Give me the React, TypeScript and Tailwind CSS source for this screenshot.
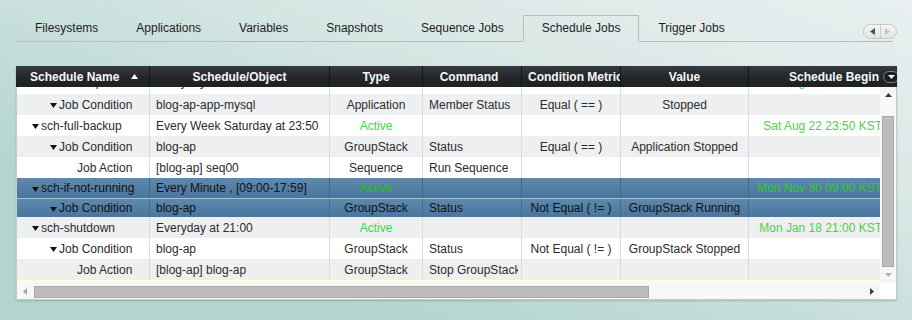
import React from "react";

type Bg = "white" | "grey" | "sel";
type Row = {
  level: 0 | 1 | 2;
  exp: boolean;
  name: string;
  obj: string;
  type: string;
  active?: boolean;
  cmd: string;
  metric: string;
  value: string;
  begin: string;
  bg: Bg;
  h: "h21" | "h18" | "h24";
};

const rows: Row[] = [
  { level: 1, exp: true, name: "Job Condition", obj: "blog-ap-app-mysql", type: "Application", cmd: "Member Status", metric: "Equal ( == )", value: "Stopped", begin: "", bg: "grey", h: "h21" },
  { level: 0, exp: true, name: "sch-full-backup", obj: "Every Week Saturday at 23:50", type: "Active", active: true, cmd: "", metric: "", value: "", begin: "Sat Aug 22 23:50 KST", bg: "white", h: "h21" },
  { level: 1, exp: true, name: "Job Condition", obj: "blog-ap", type: "GroupStack", cmd: "Status", metric: "Equal ( == )", value: "Application Stopped", begin: "", bg: "grey", h: "h21" },
  { level: 2, exp: false, name: "Job Action", obj: "[blog-ap] seq00", type: "Sequence", cmd: "Run Sequence", metric: "", value: "", begin: "", bg: "white", h: "h21" },
  { level: 0, exp: true, name: "sch-if-not-running", obj: "Every Minute , [09:00-17:59]", type: "Active", active: true, cmd: "", metric: "", value: "", begin: "Mon Nov 30 09:00 KST", bg: "sel", h: "h21" },
  { level: 1, exp: true, name: "Job Condition", obj: "blog-ap", type: "GroupStack", cmd: "Status", metric: "Not Equal ( != )", value: "GroupStack Running", begin: "", bg: "sel", h: "h18" },
  { level: 0, exp: true, name: "sch-shutdown", obj: "Everyday at 21:00", type: "Active", active: true, cmd: "", metric: "", value: "", begin: "Mon Jan 18 21:00 KST", bg: "grey", h: "h21" },
  { level: 1, exp: true, name: "Job Condition", obj: "blog-ap", type: "GroupStack", cmd: "Status", metric: "Not Equal ( != )", value: "GroupStack Stopped", begin: "", bg: "white", h: "h21" },
  { level: 2, exp: false, name: "Job Action", obj: "[blog-ap] blog-ap", type: "GroupStack", cmd: "Stop GroupStack", metric: "", value: "", begin: "", bg: "grey", h: "h21" },
];

const levelPad: Record<number, string> = { 0: "pl-[15px]", 1: "pl-[33px]", 2: "pl-[51px]" };
const bgCls: Record<Bg, string> = {
  white: "bg-white text-[#2b2b2b]",
  grey: "bg-[#eeeff1] text-[#2b2b2b]",
  sel: "bg-[linear-gradient(#5d89af,#4a759c)] text-[#111]",
};
const hCls = { h21: "h-[21px]", h18: "h-[18px]", h24: "h-[24px]" };

function Tri({ color = "#111" }: { color?: string }) {
  return (
    <svg width="7" height="5" viewBox="0 0 7 5" className="block">
      <path d="M0 0H7L3.5 5Z" fill={color} />
    </svg>
  );
}

function DataRow({ r, first }: { r: Row; first?: boolean }) {
  const sel = r.bg === "sel";
  const bc = sel ? "border-[#46698b]" : "border-[#dadbdc]";
  const cell = `flex shrink-0 items-center h-full overflow-hidden whitespace-nowrap border-r ${bc}`;
  const activeColor = sel ? "text-[#26c026]" : "text-[#3ed63e]";
  const dateColor = sel ? "text-[#2fcb2f]" : "text-[#4fcd4f]";
  return (
    <div
      className={`flex shrink-0 w-[863px] ${hCls[r.h]} ${bgCls[r.bg]} ${first ? "-mt-[17px]" : ""} ${
        sel && r.h === "h21" ? "border-b border-[#a9c1d6]" : ""
      }`}
    >
      <div className={`${cell} w-[133px] ${levelPad[r.level]}`}>
        <div className="w-[9px] shrink-0 flex items-center pt-[2px]">{r.exp ? <Tri /> : null}</div>
        <span>{r.name}</span>
      </div>
      <div className={`${cell} w-[180px] pl-[6px]`}>{r.obj}</div>
      <div className={`${cell} w-[93px] justify-center ${r.active ? activeColor : ""}`}>{r.type}</div>
      <div className={`${cell} w-[99px] pl-[6px] pr-[3px]`}>
        <span className="min-w-0 overflow-hidden">{r.cmd}</span>
      </div>
      <div className={`${cell} w-[99px] justify-center`}>{r.metric}</div>
      <div className={`${cell} w-[128px] justify-center`}>{r.value}</div>
      <div className={`flex shrink-0 items-center h-full overflow-hidden whitespace-nowrap w-[139px] justify-end pr-[6px] ${dateColor}`}>
        {r.begin}
      </div>
    </div>
  );
}

const tabs = ["Filesystems", "Applications", "Variables", "Snapshots", "Sequence Jobs", "Schedule Jobs", "Trigger Jobs"];

export default function App() {
  return (
    <div className="w-[912px] h-[320px] overflow-hidden bg-[linear-gradient(200deg,#e9eff0_0%,#dae8e6_30%,#b3d5ce_78%)] [font-family:'Liberation_Sans',Arial,Helvetica,sans-serif] text-[12px]">
      {/* Tabs */}
      <div className="flex w-[877px] ml-[16px] pt-[15px]">
        {tabs.map((t) => {
          const active = t === "Schedule Jobs";
          return (
            <div
              key={t}
              className={`h-[27px] px-[18px] flex items-center pb-[2px] border whitespace-nowrap text-[#1e1e1e] ${
                active
                  ? "border-[#b4bebe] border-b-transparent"
                  : "border-transparent border-b-[#b4bebe]"
              }`}
            >
              {t}
            </div>
          );
        })}
        <div className="flex-1 h-[27px] border-b border-[#b4bebe] flex items-end justify-end pb-[2px]">
          <div className="mr-[-4px] w-[34px] h-[15px] rounded-full border border-[#c3c9c9] bg-[linear-gradient(#f6f6f6,#e2e4e4)] flex overflow-hidden">
            <div className="flex-1 flex items-center justify-center pl-[2px]">
              <svg width="5" height="7" viewBox="0 0 5 7">
                <path d="M5 0V7L0 3.5Z" fill="#505050" />
              </svg>
            </div>
            <div className="w-px bg-[#c9cdcd]" />
            <div className="flex-1 flex items-center justify-center pr-[2px]">
              <svg width="5" height="7" viewBox="0 0 5 7">
                <path d="M0 0V7L5 3.5Z" fill="#c4c6c6" />
              </svg>
            </div>
          </div>
        </div>
      </div>

      {/* Grid panel */}
      <div className="ml-[16px] mt-[24px] w-[881px] shadow-[0_1px_2px_rgba(0,0,0,0.18)]">
        {/* Header */}
        <div className="relative z-10 flex h-[21px] bg-[linear-gradient(#383b3f,#25282b_50%,#1e2124)] text-[#f4f6f8] font-bold overflow-hidden">
          <div className="w-[134px] flex items-center pl-[14px] pr-[11px] border-r border-[#141618] shrink-0">
            <span>Schedule Name</span>
            <svg width="7" height="5" viewBox="0 0 7 5" className="ml-auto">
              <path d="M0 5H7L3.5 0Z" fill="#fff" />
            </svg>
          </div>
          <div className="w-[180px] flex items-center justify-center border-r border-[#141618] shrink-0">Schedule/Object</div>
          <div className="w-[93px] flex items-center justify-center border-r border-[#141618] shrink-0">Type</div>
          <div className="w-[99px] flex items-center justify-center pr-[6px] border-r border-[#141618] shrink-0">Command</div>
          <div className="w-[99px] flex items-center pl-[6px] border-r border-[#141618] shrink-0 overflow-hidden whitespace-nowrap">
            <span>Condition Metric</span>
          </div>
          <div className="w-[128px] flex items-center justify-center border-r border-[#141618] shrink-0">Value</div>
          <div className="flex-1 flex items-center justify-end overflow-hidden whitespace-nowrap">
            <span>Schedule Begin</span>
            <div className="ml-[4px] mr-[-2px] w-[16px] h-[12px] rounded-full border border-[#7c7f82] bg-[#1b1d1f] flex items-center justify-center">
              <svg width="7" height="4" viewBox="0 0 7 4">
                <path d="M0 0H7L3.5 4Z" fill="#f2f2f2" />
              </svg>
            </div>
          </div>
        </div>

        {/* Body */}
        <div className="flex border-l border-r border-b border-[#c5cbcb] bg-white">
          <div className="w-[863px] shrink-0 flex flex-col">
            <div className="h-[193px] overflow-hidden flex flex-col">
              <DataRow
                first
                r={{ level: 0, exp: true, name: "sch-backup", obj: "Everyday at 01:00", type: "Active", active: true, cmd: "", metric: "", value: "", begin: "Sat Aug 22 01:00 KST", bg: "white", h: "h24" }}
              />
              {rows.map((r, i) => (
                <DataRow key={i} r={r} />
              ))}
            </div>
            <div className="h-[3px] bg-[#fbfbea]" />
            {/* Horizontal scrollbar */}
            <div className="h-[16px] flex bg-[#f7f7f7]">
              <div className="w-[16px] shrink-0 flex items-center justify-center">
                <svg width="4" height="7" viewBox="0 0 4 7">
                  <path d="M4 0V7L0 3.5Z" fill="#a2a2a2" />
                </svg>
              </div>
              <div className="ml-px mt-[3px] w-[615px] shrink-0 h-[12px] bg-[#bcbcbc] border border-[#a8a8a8]" />
              <div className="flex-1" />
              <div className="w-[16px] shrink-0 flex items-center justify-center">
                <svg width="4" height="7" viewBox="0 0 4 7">
                  <path d="M0 0V7L4 3.5Z" fill="#3a3a3a" />
                </svg>
              </div>
            </div>
          </div>
          {/* Vertical scrollbar */}
          <div className="w-[16px] shrink-0 flex flex-col">
            <div className="h-[196px] flex flex-col bg-[#f7f7f7]">
              <div className="h-[16px] flex items-center justify-center">
                <svg width="7" height="4" viewBox="0 0 7 4">
                  <path d="M0 4H7L3.5 0Z" fill="#3a3a3a" />
                </svg>
              </div>
              <div className="flex-1 flex flex-col justify-end">
                <div className="ml-[2px] w-[12px] h-[151px] bg-[#bcbcbc] border border-[#a8a8a8]" />
              </div>
              <div className="h-[16px] flex items-center justify-center">
                <svg width="7" height="4" viewBox="0 0 7 4">
                  <path d="M0 0H7L3.5 4Z" fill="#b2b2b2" />
                </svg>
              </div>
            </div>
            <div className="h-[16px] bg-white" />
          </div>
        </div>
      </div>
    </div>
  );
}
